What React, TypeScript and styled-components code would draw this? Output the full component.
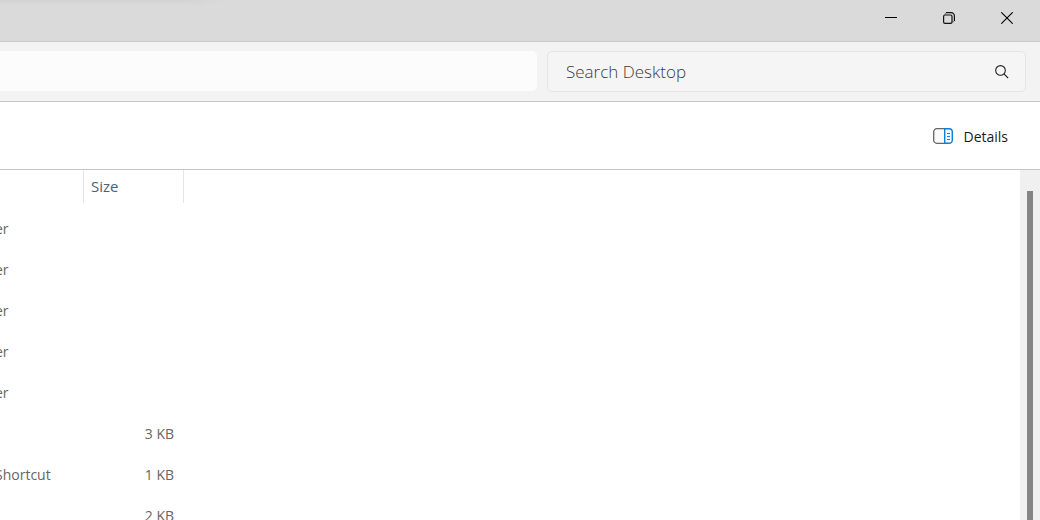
import React from "react";
import styled, { createGlobalStyle } from "styled-components";

const GlobalStyle = createGlobalStyle`
  * { box-sizing: border-box; }
  body {
    margin: 0;
    background: #fff;
    font-family: "Open Sans", "Noto Sans", sans-serif;
    font-size: 14px;
    color: #1b1b1b;
  }
  button, input { font: inherit; color: inherit; }
`;

const Window = styled.div`
  display: flex;
  flex-direction: column;
  height: 100vh;
  overflow: hidden;
`;

const TitleBar = styled.header`
  display: flex;
  justify-content: flex-end;
  flex: none;
  height: 42px;
  padding-right: 4px;
  background:
    linear-gradient(to right, transparent 190px, #dadada 224px) left top / 224px 6px no-repeat,
    linear-gradient(to bottom, #d3d3d3, #dadada) left top / 224px 6px no-repeat,
    #dadada;
  border-bottom: 1px solid #c9c9c9;
`;

const CaptionButton = styled.button`
  display: flex;
  align-items: center;
  justify-content: center;
  width: 58px;
  height: 36px;
  padding: 0;
  border: 0;
  background: transparent;
`;

const NavBar = styled.div`
  display: flex;
  flex: none;
  gap: 10px;
  padding: 9px 14px 9px 0;
  background: #f3f3f3;
  border-bottom: 1px solid #c6c6c6;
`;

const AddressBox = styled.input`
  flex: 1;
  min-width: 0;
  height: 40px;
  padding: 0 12px;
  border: 0;
  border-radius: 0 5px 5px 0;
  background: #fcfcfc;
`;

const SearchField = styled.label`
  display: flex;
  align-items: center;
  flex: 0 1 479px;
  min-width: 0;
  height: 41px;
  padding: 0 16px 0 18px;
  border: 1px solid #e5e5e5;
  border-radius: 5px;
  background: #f5f5f5;
`;

const SearchInput = styled.input`
  flex: 1;
  min-width: 0;
  padding: 0;
  border: 0;
  outline: 0;
  background: transparent;
  font-size: 17px;
  font-weight: 300;
  line-height: 24px;
  &::placeholder { color: #3c3c3c; opacity: 1; }
`;

const CommandBar = styled.div`
  display: flex;
  align-items: center;
  justify-content: flex-end;
  flex: none;
  height: 68px;
  padding-right: 32px;
  border-bottom: 1px solid #c6c6c6;
`;

const DetailsButton = styled.button`
  display: flex;
  align-items: center;
  gap: 10px;
  padding: 0;
  border: 0;
  background: transparent;
  line-height: 20px;
`;

const ButtonLabel = styled.span`
  padding-top: 2px;
`;

const Content = styled.main`
  display: flex;
  flex: 1;
  min-height: 0;
`;

const ListPane = styled.div`
  flex: 1;
  min-width: 0;
  overflow: hidden;
`;

const FileTable = styled.table`
  width: 184px;
  table-layout: fixed;
  border-collapse: separate;
  border-spacing: 0;
  color: #666;
`;

const HeaderCell = styled.th<{ $width: number }>`
  width: ${(p) => p.$width}px;
  height: 33px;
  padding: 0 7px 2px;
  border-right: 1px solid #e5e5e5;
  color: #4c607a;
  font-size: 15px;
  font-weight: 400;
  line-height: 20px;
  text-align: left;
`;

const SpacerCell = styled.td`
  height: 5px;
  padding: 0;
`;

const TypeCell = styled.td`
  height: 41px;
  padding: 0;
  line-height: 20px;
  text-indent: -5px;
`;

const SizeCell = styled.td`
  padding: 0 10px 0 0;
  line-height: 20px;
  text-align: right;
`;

const ScrollTrack = styled.div`
  display: flex;
  justify-content: flex-end;
  width: 20px;
  padding: 21px 7px 0 0;
  background: #f0f0f0;
`;

const ScrollThumb = styled.div`
  width: 6px;
  background: #858585;
`;

const rows = [
  { type: "er", size: "" },
  { type: "er", size: "" },
  { type: "er", size: "" },
  { type: "er", size: "" },
  { type: "er", size: "" },
  { type: "", size: "3 KB" },
  { type: "Shortcut", size: "1 KB" },
  { type: "", size: "2 KB" },
];

const MinimizeIcon = () => (
  <svg width="12" height="12" viewBox="0 0 12 12" aria-hidden="true">
    <path d="M0 5.5h12" stroke="#000" />
  </svg>
);

const RestoreIcon = () => (
  <svg width="12" height="12" viewBox="0 0 12 12" fill="none" stroke="#111" strokeWidth="1.2" aria-hidden="true">
    <rect x="0.6" y="3" width="8.4" height="8.4" rx="1.4" />
    <path d="M3 .7h5.2a3.2 3.2 0 0 1 3.2 3.2V9" />
    <path d="M3 .7C2.4 1 2.2 1.6 2.2 2.6M11.4 9c-.3.6-.9.8-1.9.8" strokeWidth="0.6" />
  </svg>
);

const CloseIcon = () => (
  <svg width="12" height="12" viewBox="0 0 12 12" aria-hidden="true">
    <path d="M.3.3l11.4 11.4M11.7.3L.3 11.7" stroke="#000" strokeWidth="1.1" />
  </svg>
);

const SearchIcon = () => (
  <svg width="14" height="14" viewBox="0 0 14 14" fill="none" stroke="#222" strokeWidth="1.1" aria-hidden="true">
    <circle cx="5.5" cy="5.4" r="4.8" />
    <path d="M8.9 8.8l4.2 4.2" />
  </svg>
);

const DetailsIcon = () => (
  <svg width="20" height="16" viewBox="0 0 20 16" fill="none" aria-hidden="true">
    <path d="M12 .7H3.8A3.1 3.1 0 0 0 .7 3.8v8.4a3.1 3.1 0 0 0 3.1 3.1H12z" fill="#fafafa" stroke="#666" strokeWidth="1.3" />
    <path d="M11.7.7h4.5a3.1 3.1 0 0 1 3.1 3.1v8.4a3.1 3.1 0 0 1-3.1 3.1h-4.5z" fill="#f3faff" stroke="#0f7fd4" strokeWidth="1.4" />
    <path d="M14 5.5h3M14 8.5h3M14 11.5h3" stroke="#1684d8" strokeWidth="1.2" />
  </svg>
);

export default function App() {
  return (
    <Window>
      <GlobalStyle />
      <TitleBar>
        <CaptionButton aria-label="Minimize"><MinimizeIcon /></CaptionButton>
        <CaptionButton aria-label="Restore"><RestoreIcon /></CaptionButton>
        <CaptionButton aria-label="Close"><CloseIcon /></CaptionButton>
      </TitleBar>
      <NavBar>
        <AddressBox type="text" aria-label="Address" />
        <SearchField>
          <SearchInput type="text" aria-label="Search Desktop" placeholder="Search Desktop" />
          <SearchIcon />
        </SearchField>
      </NavBar>
      <CommandBar>
        <DetailsButton><DetailsIcon /><ButtonLabel>Details</ButtonLabel></DetailsButton>
      </CommandBar>
      <Content>
        <ListPane>
          <FileTable>
            <thead>
              <tr>
                <HeaderCell $width={84} scope="col" aria-label="Type" />
                <HeaderCell $width={100} scope="col">Size</HeaderCell>
              </tr>
            </thead>
            <tbody>
              <tr aria-hidden="true"><SpacerCell colSpan={2} /></tr>
              {rows.map((row, i) => (
                <tr key={i}>
                  <TypeCell>{row.type}</TypeCell>
                  <SizeCell>{row.size}</SizeCell>
                </tr>
              ))}
            </tbody>
          </FileTable>
        </ListPane>
        <ScrollTrack>
          <ScrollThumb />
        </ScrollTrack>
      </Content>
    </Window>
  );
}
